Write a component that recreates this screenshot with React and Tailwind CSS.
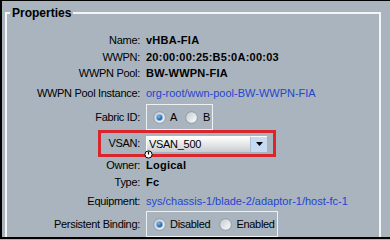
import React from "react";

function Radio({ checked }) {
  return (
    <svg width="13" height="13" viewBox="0 0 13 13" className="shrink-0 block">
      <defs>
        <linearGradient id="rgbg" x1="0" y1="0" x2="1" y2="1">
          <stop offset="0" stopColor="#c3c9cf" />
          <stop offset="1" stopColor="#ffffff" />
        </linearGradient>
        <radialGradient id="rgdot" cx="0.4" cy="0.35" r="0.7">
          <stop offset="0" stopColor="#7dbdf0" />
          <stop offset="0.6" stopColor="#2a6fb3" />
          <stop offset="1" stopColor="#174a80" />
        </radialGradient>
      </defs>
      <circle cx="6.5" cy="6.5" r="5.8" fill="url(#rgbg)" stroke="#8e9ba6" strokeWidth="1" />
      {checked && (
        <circle cx="6.5" cy="6.5" r="3.2" fill="url(#rgdot)" stroke="#a9cdee" strokeWidth="0.8" />
      )}
    </svg>
  );
}

function Row({ h, label, children }) {
  return (
    <div className={`flex items-center ${h}`}>
      <div className="w-[133px] shrink-0 text-right tracking-[-0.3px]">{label}</div>
      <div className="ml-[6px] flex items-center">{children}</div>
    </div>
  );
}

const bold = "font-bold tracking-[0.25px]";
const link = "text-[#2545cf]";

export default function App() {
  return (
    <div className="w-[390px] h-[240px] overflow-hidden bg-[#a9b4be] font-['Liberation_Sans',Arial,sans-serif] text-[11px] leading-none text-black">
      <div className="h-[239px] overflow-hidden border-t border-l-2 border-b-2 border-black pl-[3px] pt-[11px]">
        <div className="relative w-[376px] h-[260px] border-2 border-[#f3f5f7]">
          <div className="absolute left-[3px] top-[-8px] bg-[#a9b4be] px-[2px] text-[12px] font-bold leading-[14px]">
            Properties
          </div>
          <div className="h-[18px]" />
          <Row h="h-[17px]" label="Name:">
            <span className={bold}>vHBA-FIA</span>
          </Row>
          <Row h="h-[16px]" label="WWPN:">
            <span className={bold}>20:00:00:25:B5:0A:00:03</span>
          </Row>
          <Row h="h-[17px]" label="WWPN Pool:">
            <span className={bold}>BW-WWPN-FIA</span>
          </Row>
          <Row h="h-[22px]" label="WWPN Pool Instance:">
            <span className={link}>org-root/wwn-pool-BW-WWPN-FIA</span>
          </Row>
          <Row h="h-[26px]" label="Fabric ID:">
            <div className="flex h-[26px] w-[67px] items-center border border-[#eef1f3] pl-[6px] tracking-[-0.3px]">
              <Radio checked />
              <span className="ml-[4px]">A</span>
              <span className="ml-[8px]"><Radio /></span>
              <span className="ml-[5px]">B</span>
            </div>
          </Row>
          <div className="ml-[91px] flex h-[27px] w-[178px] items-center border-[3px] border-[#d9262d]">
            <div className="w-[39px] shrink-0 text-right tracking-[-0.3px]">VSAN:</div>
            <div className="relative ml-[6px] flex h-[16px] w-[121px] items-center border-t border-l border-white bg-gradient-to-b from-white to-[#c9ccd0]">
              <span className="pl-[2px] tracking-[-0.3px]">VSAN_500</span>
              <div className="ml-auto flex h-full w-[17px] items-center justify-center border-l border-[#a9c0d8] bg-[#c6dbf1]">
                <svg width="7" height="4" viewBox="0 0 7 4" className="block">
                  <path d="M0 0H7L3.5 4Z" fill="#000" />
                </svg>
              </div>
              <svg width="9" height="9" viewBox="0 0 9 9" className="absolute left-[-3px] top-[13px] block">
                <circle cx="4.5" cy="4.5" r="3.6" fill="#fff" stroke="#000" strokeWidth="1" />
                <path d="M4.5 1.5V4.5" stroke="#000" strokeWidth="1.2" />
              </svg>
            </div>
          </div>
          <Row h="h-[16px]" label="Owner:">
            <span className={bold}>Logical</span>
          </Row>
          <Row h="h-[19px]" label="Type:">
            <span className={bold}>Fc</span>
          </Row>
          <Row h="h-[19px]" label="Equipment:">
            <span className={link}>sys/chassis-1/blade-2/adaptor-1/host-fc-1</span>
          </Row>
          <Row h="h-[26px]" label="Persistent Binding:">
            <div className="flex h-[26px] w-[132px] items-center border border-[#eef1f3] pl-[6px] tracking-[-0.3px]">
              <Radio checked />
              <span className="ml-[4px]">Disabled</span>
              <span className="ml-[9px]"><Radio /></span>
              <span className="ml-[4px]">Enabled</span>
            </div>
          </Row>
        </div>
      </div>
    </div>
  );
}
